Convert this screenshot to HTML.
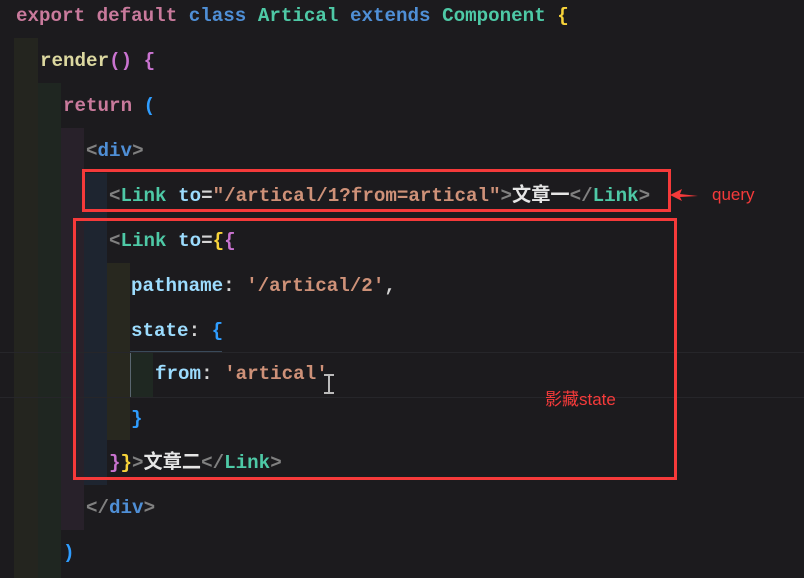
<!DOCTYPE html>
<html><head><meta charset="utf-8"><style>
html,body{margin:0;padding:0;background:#1c1b1e;width:804px;height:578px;overflow:hidden;position:relative}
.g{position:absolute}
.l{position:absolute;white-space:pre;font-family:"Liberation Mono","Noto Sans CJK SC",monospace;font-size:19.2px;line-height:24px;color:#d4d4d4;font-weight:bold;-webkit-text-stroke:0;}
.k{color:#c97a9c}.b{color:#4f8fd6}.t{color:#4ec9a6}.y{color:#f7d33a}.f{color:#dcd8a0}.p{color:#c973d0}
.gr{color:#808080}.lb{color:#9cdcfe}.s{color:#ce9178}.w{color:#e6e6e6}.bl{color:#2f9dff}
.box{position:absolute;border:3px solid #f53a3a;box-sizing:border-box}
.ann{position:absolute;color:#f53a3a;font-family:"Liberation Sans","Noto Sans CJK SC",sans-serif;font-size:17px}
</style></head><body>
<div class="g" style="left:14px;top:38px;width:24px;height:540px;background:#24251f"></div>
<div class="g" style="left:38px;top:83px;width:23px;height:495px;background:#1f2621"></div>
<div class="g" style="left:61px;top:128px;width:23px;height:402px;background:#28212a"></div>
<div class="g" style="left:84px;top:173px;width:23px;height:312px;background:#1e2530"></div>
<div class="g" style="left:107px;top:263px;width:23px;height:177px;background:#28281f"></div>
<div class="g" style="left:130px;top:352px;width:23px;height:45px;background:#1f2822;border-left:1px solid #5a6670;box-sizing:border-box"></div>
<div class="g" style="left:130px;top:351px;width:92px;height:2px;background:#3a4a5a"></div>
<div class="g" style="left:0;top:352px;width:804px;height:1px;background:#26262a"></div>
<div class="g" style="left:0;top:397px;width:804px;height:1px;background:#26262a"></div>

<div class="l" style="left:16px;top:4px"><span class="k">export</span> <span class="k">default</span> <span class="b">class</span> <span class="t">Artical</span> <span class="b">extends</span> <span class="t">Component</span> <span class="y">{</span></div>
<div class="l" style="left:40px;top:49px"><span class="f">render</span><span class="p">()</span> <span class="p">{</span></div>
<div class="l" style="left:63px;top:94px"><span class="k">return</span> <span class="bl">(</span></div>
<div class="l" style="left:86px;top:139px"><span class="gr">&lt;</span><span class="b">div</span><span class="gr">&gt;</span></div>
<div class="l" style="left:109px;top:184px"><span class="gr">&lt;</span><span class="t">Link</span> <span class="lb">to</span>=<span class="s">"/artical/1?from=artical"</span><span class="gr">&gt;</span><span class="w">文章一</span><span class="gr">&lt;/</span><span class="t">Link</span><span class="gr">&gt;</span></div>
<div class="l" style="left:109px;top:229px"><span class="gr">&lt;</span><span class="t">Link</span> <span class="lb">to</span>=<span class="y">{</span><span class="p">{</span></div>
<div class="l" style="left:131px;top:274px"><span class="lb">pathname</span>: <span class="s">'/artical/2'</span>,</div>
<div class="l" style="left:131px;top:319px"><span class="lb">state</span>: <span class="bl">{</span></div>
<div class="l" style="left:155px;top:362px"><span class="lb">from</span>: <span class="s">'artical'</span></div>
<div class="l" style="left:131px;top:407px"><span class="bl">}</span></div>
<div class="l" style="left:109px;top:451px"><span class="p">}</span><span class="y">}</span><span class="gr">&gt;</span><span class="w">文章二</span><span class="gr">&lt;/</span><span class="t">Link</span><span class="gr">&gt;</span></div>
<div class="l" style="left:86px;top:496px"><span class="gr">&lt;/</span><span class="b">div</span><span class="gr">&gt;</span></div>
<div class="l" style="left:63px;top:541px"><span class="bl">)</span></div>
<div class="g" style="left:328px;top:374px;width:2px;height:20px;background:#bbb"></div>
<div class="g" style="left:324px;top:374px;width:10px;height:2px;background:#bbb"></div>
<div class="g" style="left:324px;top:392px;width:10px;height:2px;background:#bbb"></div>

<div class="box" style="left:82px;top:169px;width:589px;height:43px"></div>
<div class="box" style="left:73px;top:218px;width:604px;height:262px"></div>
<svg class="g" style="left:668px;top:186px" width="32" height="18"><polygon points="2,9 14,3 12,8 30,10 12,11 14,15" fill="#f53a3a"/></svg>
<div class="ann" style="left:712px;top:185px">query</div>
<div class="ann" style="left:545px;top:385px">影藏state</div>
</body></html>
